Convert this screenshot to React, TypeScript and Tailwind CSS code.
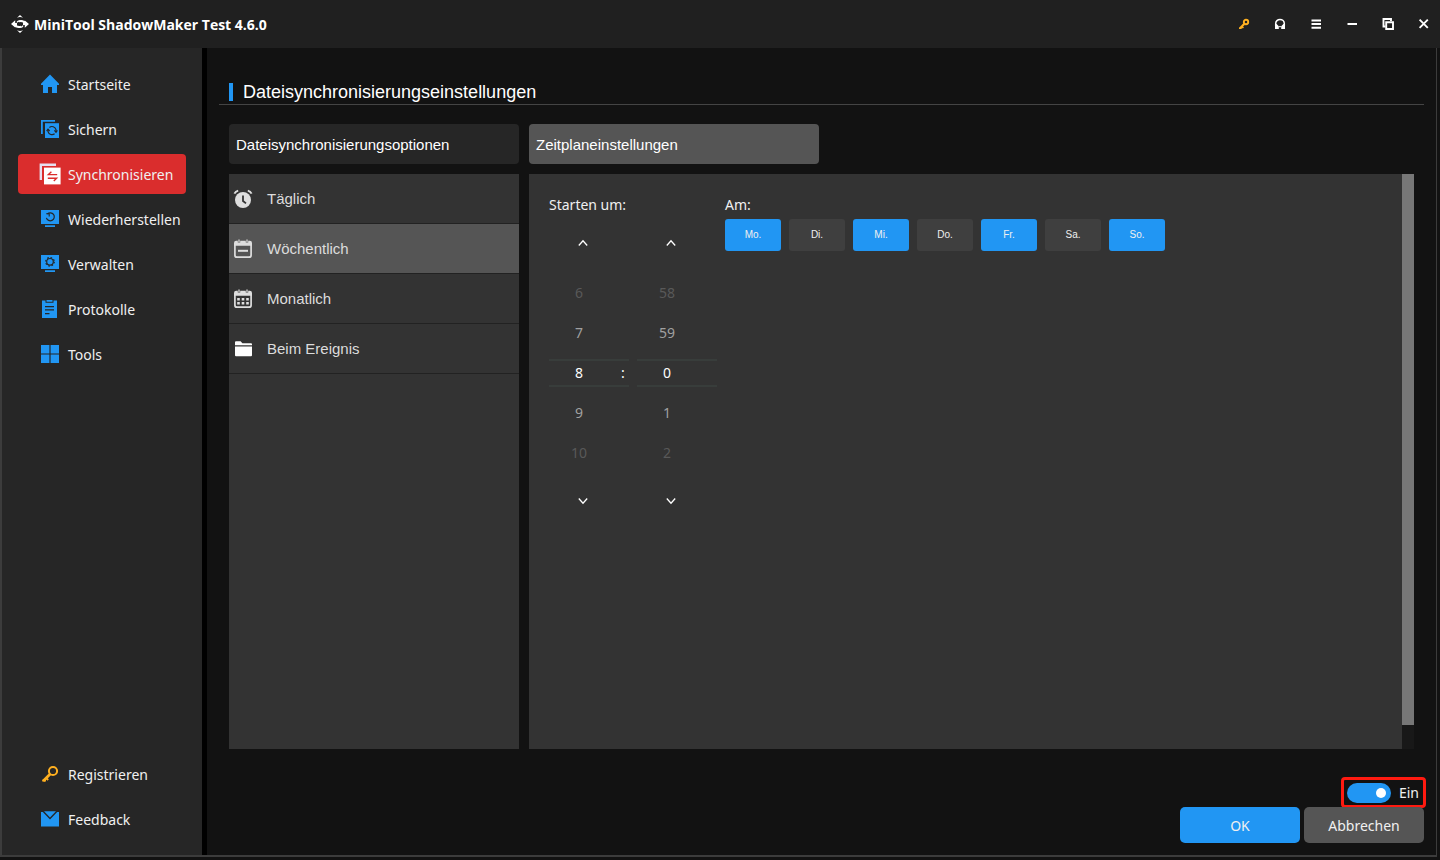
import { useState } from 'react';
import type { ReactNode } from 'react';

const BLUE = '#2196f3';
const DARK = '#262626';

function Logo() {
  return (
    <svg width="18" height="18" viewBox="0 0 18 18" fill="none" stroke="#fff" aria-hidden="true">
      <path d="M6 2.8 9 0 12 2.8Q9 1.4 6 2.8ZM6 15.2 9 18 12 15.2Q9 16.6 6 15.2Z" fill="#fff" stroke="none" />
      <path d="M0 9 4.2 5.2V8H6V10L4.2 12.4ZM18 9 13.8 12.8V10H12V8L13.8 5.6Z" fill="#fff" stroke="none" />
      <path d="M4 9.2C4.6 11.6 7 12.4 10 11.8M14 8.8C13.4 6.4 11 5.6 8 6.2" strokeWidth="2" />
      <path d="M8.6 5.8Q6.2 6 6.2 7.6M9.4 12.2Q11.8 12 11.8 10.4" strokeWidth="1.2" />
    </svg>
  );
}

function KeyIcon() {
  return (
    <svg width="18" height="18" viewBox="0 0 18 18" fill="none" stroke="#ffb020" aria-hidden="true">
      <circle cx="12" cy="6" r="4.1" strokeWidth="2" />
      <path d="M9.2 9 2.2 16" strokeWidth="2.6" />
      <path d="M5 12.8 7.2 15M1.2 15.6H5" strokeWidth="1.8" />
    </svg>
  );
}

function SmallKeyIcon() {
  return (
    <svg width="12" height="12" viewBox="0 0 12 12" fill="none" stroke="#ffb020" aria-hidden="true">
      <circle cx="8" cy="4" r="2.2" strokeWidth="1.9" />
      <path d="M6.4 5.8 2 10.2" strokeWidth="2.2" />
      <path d="M3.6 8.2 5.4 10M1 10.2H3.6" strokeWidth="1.6" />
    </svg>
  );
}

function HeadsetIcon() {
  return (
    <svg width="12" height="12" viewBox="0 0 12 12" aria-hidden="true">
      <path d="M1.7 8V5.6a4.3 4.2 0 0 1 8.6 0V8" fill="none" stroke="#fff" strokeWidth="1.5" />
      <path d="M1 6H2.6L4.8 8.2V11H1ZM11 6H9.4L7.2 8.2V11H11Z" fill="#fff" />
      <path d="M4.8 8.7H7.2" stroke="#fff" strokeWidth="1" />
    </svg>
  );
}

function MenuIcon() {
  return (
    <svg width="12" height="12" viewBox="0 0 12 12" fill="#fff" aria-hidden="true">
      <path d="M1.5 1.4h9.5v2H1.5zM1.5 5h9.5v2H1.5zM1.5 8.7h9.5v2H1.5z" />
    </svg>
  );
}

function MinimizeIcon() {
  return (
    <svg width="12" height="12" viewBox="0 0 12 12" fill="#fff" aria-hidden="true">
      <path d="M1.5 5h9.5v2H1.5z" />
    </svg>
  );
}

function RestoreIcon() {
  return (
    <svg width="12" height="12" viewBox="0 0 12 12" fill="none" stroke="#fff" aria-hidden="true">
      <path d="M3.5 8.5H1.5V1H9V3" strokeWidth="1.9" />
      <path d="M4.2 4.2H11V11H4.2Z" strokeWidth="1.9" />
    </svg>
  );
}

function CloseIcon() {
  return (
    <svg width="12" height="12" viewBox="0 0 12 12" fill="none" stroke="#fff" aria-hidden="true">
      <path d="M1.6 1.6 9.8 9.8M9.8 1.6 1.6 9.8" strokeWidth="1.9" />
    </svg>
  );
}

function HomeIcon() {
  return (
    <svg width="18" height="20" viewBox="0 0 18 20" fill={BLUE} aria-hidden="true">
      <path d="M9 .5 0 9.8V11H2V19H7V13H11V19H16V11H18V9.8Z" />
    </svg>
  );
}

function BackupIcon() {
  return (
    <svg width="18" height="18" viewBox="0 0 18 18" aria-hidden="true">
      <path d="M.9 14V.9H14" fill="none" stroke={BLUE} strokeWidth="1.8" />
      <path d="M4 3.2H18V18H4Z" fill={BLUE} />
      <g fill="none" stroke={DARK} strokeWidth="1.2">
        <path d="M8.4 7.4A4.2 4.2 0 0 1 15 9.6V12M13.6 13.8A4.2 4.2 0 0 1 7 11.6V9.4" />
        <path d="M13.4 10.4 15 12.2 16.4 10.4M8.6 11 7 9.2 5.6 11" />
      </g>
    </svg>
  );
}

function SyncIcon() {
  return (
    <svg width="22" height="22" viewBox="0 0 22 22" aria-hidden="true">
      <path d="M1.8 17V1.8H17" fill="none" stroke="#e6dff0" strokeWidth="2.4" />
      <path d="M5 4.6H21.6V21.4H5Z" fill="#fff" />
      <path d="M18.2 11.6H9.4L12.4 8.8M8.8 15.2H17.6L14.8 18" fill="none" stroke="#da2d2d" strokeWidth="1.4" />
    </svg>
  );
}

function Monitor({ children }: { children: ReactNode }) {
  return (
    <svg width="18" height="18" viewBox="0 0 18 18" aria-hidden="true">
      <path d="M0 0H18V14H0ZM4 15.2H14V17H4Z" fill={BLUE} />
      {children}
    </svg>
  );
}

function RestoreDataIcon() {
  return (
    <Monitor>
      <path d="M6.4 4A4 4 0 1 1 5.4 7.8" fill="none" stroke={DARK} strokeWidth="1.2" />
      <path d="M5.2 3.8H8.2V6.4" fill="none" stroke={DARK} strokeWidth="1.1" />
    </Monitor>
  );
}

function ManageIcon() {
  return (
    <Monitor>
      <circle cx="9" cy="6.8" r="3.3" fill="none" stroke={DARK} strokeWidth="1.2" />
      <circle cx="9" cy="6.8" r="4.3" fill="none" stroke={DARK} strokeWidth="1.2" strokeDasharray="1.6 1.78" />
    </Monitor>
  );
}

function LogsIcon() {
  return (
    <svg width="18" height="18" viewBox="0 0 18 18" aria-hidden="true">
      <path d="M1 .5H4.5V2.8H12.5V.5H16V18H1Z" fill={BLUE} />
      <path d="M5.5 0H11.5V1.8H5.5Z" fill={BLUE} />
      <path d="M4 6.6H13M4 9.9H13M4 13.6H8.5" stroke={DARK} strokeWidth="1.2" />
    </svg>
  );
}

function ToolsIcon() {
  return (
    <svg width="18" height="18" viewBox="0 0 18 18" fill={BLUE} aria-hidden="true">
      <path d="M0 0H8.4V8.4H0ZM9.6 0H18V8.4H9.6ZM0 9.6H8.4V18H0ZM9.6 9.6H18V18H9.6Z" />
    </svg>
  );
}

function MailIcon() {
  return (
    <svg width="18" height="16" viewBox="0 0 18 16" fill={BLUE} aria-hidden="true">
      <path d="M0 1H1.8L9 8.6 16.2 1H18V15.4H0Z" />
      <path d="M3 .2H15L9 6.6Z" />
    </svg>
  );
}

function AlarmIcon() {
  return (
    <svg width="20" height="20" viewBox="0 0 20 20" aria-hidden="true">
      <circle cx="10" cy="11" r="8" fill="#dedede" />
      <path d="M1.4 4.6Q2.6 2.2 5.2 1.6M18.6 4.6Q17.4 2.2 14.8 1.6" fill="none" stroke="#dedede" strokeWidth="1.9" />
      <path d="M10 6.4V12L13 14.4" fill="none" stroke="#333" strokeWidth="1.8" />
    </svg>
  );
}

function CalendarFrame({ children }: { children: ReactNode }) {
  return (
    <svg width="20" height="20" viewBox="0 0 20 20" aria-hidden="true">
      <path d="M1.9 5V16.2Q1.9 18.2 4 18.2H16Q18.1 18.2 18.1 16.2V5" fill="none" stroke="#dedede" strokeWidth="1.7" />
      <path d="M1 6.8V4Q1 1.8 3.2 1.8H4.8V3.4H7.2V1.8H12.8V3.4H15.2V1.8H16.8Q19 1.8 19 4V6.8Z" fill="#dedede" />
      <path d="M6 .6V3.2M14 .6V3.2" stroke="#c4c4c4" strokeWidth="1.5" />
      {children}
    </svg>
  );
}

function WeekIcon() {
  return (
    <CalendarFrame>
      <path d="M5 11.8H15" stroke="#dedede" strokeWidth="2" />
    </CalendarFrame>
  );
}

function MonthIcon() {
  return (
    <CalendarFrame>
      <path
        d="M4.2 9h2.6v2.4H4.2zM8.7 9h2.6v2.4H8.7zM13.2 9h2.6v2.4h-2.6zM4.2 13h2.6v2.4H4.2zM8.7 13h2.6v2.4H8.7zM13.2 13h2.6v2.4h-2.6z"
        fill="#dedede"
      />
    </CalendarFrame>
  );
}

function FolderIcon() {
  return (
    <svg width="20" height="20" viewBox="0 0 20 20" fill="#fff" aria-hidden="true">
      <path d="M2 6.2V3.2Q2 2.2 3 2.2H7.6L9.4 4.2H18Q19 4.2 19 5.2V6.2Z" />
      <path d="M2 7.4H19V16.2Q19 17.2 18 17.2H3Q2 17.2 2 16.2Z" />
    </svg>
  );
}

function Chevron({ down = false }: { down?: boolean }) {
  return (
    <svg width="10" height="8" viewBox="0 0 10 8" fill="none" stroke="#fff" strokeWidth="1.3" aria-hidden="true">
      <path d={down ? 'M.8 1.5 5 6.2 9.2 1.5' : 'M.8 6.5 5 1.8 9.2 6.5'} />
    </svg>
  );
}

const windowButtons = [
  { label: 'Lizenz', icon: <SmallKeyIcon /> },
  { label: 'Support', icon: <HeadsetIcon /> },
  { label: 'Menü', icon: <MenuIcon /> },
  { label: 'Minimieren', icon: <MinimizeIcon /> },
  { label: 'Verkleinern', icon: <RestoreIcon /> },
  { label: 'Schließen', icon: <CloseIcon /> },
];

const mainNav = [
  { label: 'Startseite', icon: <HomeIcon /> },
  { label: 'Sichern', icon: <BackupIcon /> },
  { label: 'Synchronisieren', icon: <SyncIcon />, active: true },
  { label: 'Wiederherstellen', icon: <RestoreDataIcon /> },
  { label: 'Verwalten', icon: <ManageIcon /> },
  { label: 'Protokolle', icon: <LogsIcon /> },
  { label: 'Tools', icon: <ToolsIcon /> },
];

const footerNav = [
  { label: 'Registrieren', icon: <KeyIcon /> },
  { label: 'Feedback', icon: <MailIcon /> },
];

const modes = [
  { label: 'Täglich', icon: <AlarmIcon /> },
  { label: 'Wöchentlich', icon: <WeekIcon /> },
  { label: 'Monatlich', icon: <MonthIcon /> },
  { label: 'Beim Ereignis', icon: <FolderIcon /> },
];

const dayNames = ['Mo.', 'Di.', 'Mi.', 'Do.', 'Fr.', 'Sa.', 'So.'];

function NavItem({ label, icon, active = false }: { label: string; icon: ReactNode; active?: boolean }) {
  return (
    <a
      href="#"
      aria-current={active ? 'page' : undefined}
      className={`flex h-10 items-center gap-1.5 rounded-sm pl-5 text-[#f0f0f0] ${active ? 'bg-[#da2d2d]' : ''}`}
    >
      <span className="flex w-6 shrink-0 justify-center">{icon}</span>
      <span className="pt-0.5">{label}</span>
    </a>
  );
}

const shades = ['text-[#595959]', 'text-[#a0a0a0]', 'text-white', 'text-[#a0a0a0]', 'text-[#595959]'];

function Wheel({ name, start, size, colon = false }: { name: string; start: number; size: number; colon?: boolean }) {
  const [value, setValue] = useState(start);
  const step = (n: number) => setValue((v) => (v + n + size) % size);
  return (
    <div className="flex w-20 flex-col" role="group" aria-label={name}>
      <button type="button" aria-label={`${name} zurück`} onClick={() => step(-1)} className="mb-1 flex h-13 w-17 items-center justify-center">
        <Chevron />
      </button>
      {[-2, -1, 0, 1, 2].map((offset, i) => (
        <div
          key={offset}
          className={`flex items-center ${shades[i]} ${offset === 0 ? 'my-1.5 h-7 border-y-2 border-[#383d3b]' : 'h-10'}`}
        >
          <span className="w-15 text-center">{(value + offset + size) % size}</span>
          {offset === 0 && colon && <span className="flex-1 pl-3">:</span>}
        </div>
      ))}
      <button type="button" aria-label={`${name} weiter`} onClick={() => step(1)} className="flex h-14 w-17 items-center justify-center">
        <Chevron down />
      </button>
    </div>
  );
}

export default function App() {
  const [mode, setMode] = useState(1);
  const [days, setDays] = useState([true, false, true, false, true, false, true]);
  const [enabled, setEnabled] = useState(true);

  return (
    <div className="flex min-h-screen flex-col bg-[#121212] pb-[3px] font-['Noto_Sans',sans-serif] text-sm text-[#f0f0f0]">
      <header className="flex h-12 items-center justify-between bg-[#202020] pr-2.5 pl-[11px]">
        <div className="flex items-center gap-[5px]">
          <Logo />
          <h1 className="pt-0.5 font-['Open_Sans',sans-serif] font-bold text-white">MiniTool ShadowMaker Test 4.6.0</h1>
        </div>
        <div className="flex gap-6">
          {windowButtons.map((b) => (
            <button key={b.label} type="button" aria-label={b.label}>
              {b.icon}
            </button>
          ))}
        </div>
      </header>

      <div className="mr-[3px] flex flex-1 border-r border-b-2 border-l-2 border-[#3c3c3c]">
        <nav className="flex w-50 shrink-0 flex-col justify-between bg-[#262626] p-4">
          <div className="flex flex-col gap-[5px]">
            {mainNav.map((item) => (
              <NavItem key={item.label} {...item} />
            ))}
          </div>
          <div className="flex flex-col gap-[5px]">
            {footerNav.map((item) => (
              <NavItem key={item.label} {...item} />
            ))}
          </div>
        </nav>

        <main className="flex min-w-0 flex-1 flex-col border-l-5 border-black pt-8 pr-3 pb-3 pl-3">
          <div className="flex h-[25px] items-center gap-2.5 border-b border-[#444] pl-2.5">
            <span className="h-[18px] w-1 bg-[#2196f3]" />
            <h2 className="font-['Liberation_Sans',sans-serif] text-lg text-white">Dateisynchronisierungseinstellungen</h2>
          </div>

          <div className="mt-[19px] flex gap-2.5 pl-2.5 font-['Liberation_Sans',sans-serif] text-[15px] text-white" role="tablist">
            <button type="button" role="tab" aria-selected={false} className="h-10 w-[290px] rounded-sm bg-[#262626] px-[7px] pt-0.5 text-left">
              Dateisynchronisierungsoptionen
            </button>
            <button type="button" role="tab" aria-selected className="h-10 w-[290px] rounded-sm bg-[#555] px-[7px] pt-0.5 text-left">
              Zeitplaneinstellungen
            </button>
          </div>

          <div className="mt-2.5 flex flex-1 gap-2.5 px-2.5">
            <div className="w-[290px] shrink-0 bg-[#333] font-['Liberation_Sans',sans-serif] text-[15px] text-[#dcdcdc]">
              {modes.map((m, i) => (
                <button
                  key={m.label}
                  type="button"
                  aria-pressed={mode === i}
                  onClick={() => setMode(i)}
                  className={`flex h-[50px] w-full items-center gap-3.5 border-b border-[#222] pl-1 ${mode === i ? 'bg-[#555]' : ''}`}
                >
                  {m.icon}
                  {m.label}
                </button>
              ))}
            </div>

            <div className="flex min-w-0 flex-1 bg-[#333]">
              <div className="flex flex-1 gap-2 p-5">
                <section className="flex w-42 flex-col">
                  <h3 className="h-[23px] pt-px">Starten um:</h3>
                  <div className="flex gap-2">
                    <Wheel name="Stunde" start={8} size={24} colon />
                    <Wheel name="Minute" start={0} size={60} />
                  </div>
                </section>
                <section>
                  <h3 className="h-[25px] pt-px">Am:</h3>
                  <div className="flex gap-2 font-['Liberation_Sans',sans-serif] text-[10px]">
                    {dayNames.map((d, i) => (
                      <button
                        key={d}
                        type="button"
                        aria-pressed={days[i]}
                        onClick={() => setDays(days.map((on, k) => (k === i ? !on : on)))}
                        className={`h-8 w-14 rounded-[3px] ${days[i] ? 'bg-[#2196f3]' : 'bg-[#3f3f3f]'}`}
                      >
                        {d}
                      </button>
                    ))}
                  </div>
                </section>
              </div>
              <div className="w-3 bg-[#181818] pb-6">
                <div className="h-full bg-[#777]" />
              </div>
            </div>
          </div>

          <div className="mt-[31px] flex flex-col items-end">
            <label className="mr-px mb-0.5 flex h-[25px] items-center justify-between gap-2 rounded-[1px] pr-1 pl-[3px] outline-3 outline-[#ff1a10]">
              <input
                type="checkbox"
                role="switch"
                checked={enabled}
                onChange={(e) => setEnabled(e.target.checked)}
                className="flex h-5 w-11 appearance-none items-center rounded-full bg-[#555] px-[5px] before:size-2.5 before:rounded-full before:bg-white checked:justify-end checked:bg-[#2196f3]"
              />
              Ein
            </label>
            <div className="flex gap-1">
              <button type="button" className="h-9 w-30 rounded-[5px] bg-[#2196f3] pt-0.5">
                OK
              </button>
              <button type="button" className="h-9 w-30 rounded-[5px] bg-[#555] pt-0.5">
                Abbrechen
              </button>
            </div>
          </div>
        </main>
      </div>
    </div>
  );
}
